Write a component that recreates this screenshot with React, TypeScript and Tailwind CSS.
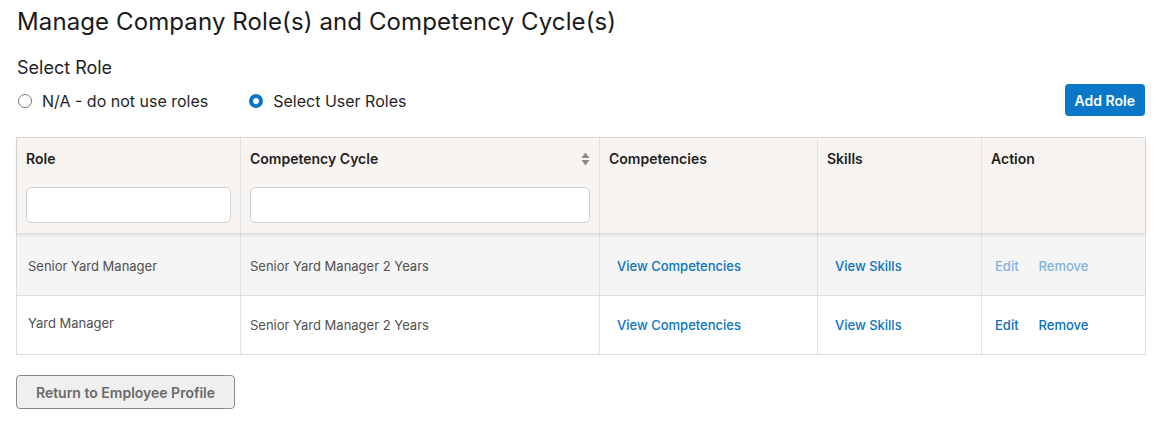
import React from "react";

const cols = "grid grid-cols-[224px_359px_218px_164px_1fr]";

function SortIcon() {
  return (
    <svg width="9" height="14" viewBox="0 0 9 14" className="text-[#8a8a8a]">
      <path d="M4.5 0.5 L8.5 6 L0.5 6 Z" fill="currentColor" />
      <path d="M4.5 13.5 L8.5 8 L0.5 8 Z" fill="currentColor" />
    </svg>
  );
}

export default function App() {
  const rows = [
    { role: "Senior Yard Manager", cycle: "Senior Yard Manager 2 Years", bg: "bg-[#f5f5f5]", h: "h-[62px]", pad: "pt-[6px]", rolePad: "pt-[6px]", disabled: true },
    { role: "Yard Manager", cycle: "Senior Yard Manager 2 Years", bg: "bg-white", h: "h-[59px]", pad: "pt-[1px]", rolePad: "pb-[3px]", disabled: false },
  ];
  return (
    <div className="px-4 pt-[6px] text-[#1f1f1f]" style={{ fontFamily: "Inter, 'Noto Sans', sans-serif" }}>
      <h1 className="text-[24px] leading-[32px] font-normal text-[#1a1a1a] pl-[1px] tracking-[0.11px]">
        Manage Company Role(s) and Competency Cycle(s)
      </h1>
      <div className="mt-[18px] text-[18px] leading-[24px] pl-[1px]">Select Role</div>
      <div className="mt-[4px] flex items-center justify-between h-[32px]">
        <div className="flex items-center text-[16px] pt-[2px]">
          <label className="flex items-center gap-[10px] ml-[2px]">
            <span className="w-[14px] h-[14px] rounded-full border border-[#767676] bg-white" />
            <span>N/A - do not use roles</span>
          </label>
          <label className="flex items-center gap-[10px] ml-[41px]">
            <span className="w-[14px] h-[14px] rounded-full bg-[#0a74c4] flex items-center justify-center">
              <span className="w-[6px] h-[6px] rounded-full bg-white" />
            </span>
            <span>Select User Roles</span>
          </label>
        </div>
        <button className="h-[32px] px-[10px] rounded-[4px] bg-[#0a77c8] text-white text-[14px] font-semibold mr-[1px]">
          Add Role
        </button>
      </div>

      <div className="mt-[21px] border border-[#dcdcdc]">
        <div className={`${cols} bg-[#f8f4f2] h-[95px] shadow-[0_2px_4px_rgba(0,0,0,0.12)] relative z-10`}>
          <div className="border-r border-[#e2e2e2] px-[9px] pt-[11px]">
            <div className="text-[14px] leading-[20px] font-semibold">Role</div>
            <div className="mt-[18px] h-[36px] bg-white border border-[#d0d0d0] rounded-[5px]" />
          </div>
          <div className="border-r border-[#e2e2e2] px-[9px] pt-[11px]">
            <div className="flex items-center justify-between text-[14px] leading-[20px] font-semibold">
              <span>Competency Cycle</span>
              <SortIcon />
            </div>
            <div className="mt-[18px] h-[36px] bg-white border border-[#d0d0d0] rounded-[5px]" />
          </div>
          <div className="border-r border-[#e2e2e2] px-[9px] pt-[11px] text-[14px] leading-[20px] font-semibold">Competencies</div>
          <div className="border-r border-[#e2e2e2] px-[9px] pt-[11px] text-[14px] leading-[20px] font-semibold">Skills</div>
          <div className="px-[9px] pt-[11px] text-[14px] leading-[20px] font-semibold">Action</div>
        </div>
        {rows.map((r, i) => (
          <div key={i} className={`${cols} ${r.bg} ${r.h} ${i > 0 ? "border-t border-[#e0e0e0]" : ""} text-[13px]`}>
            <div className={`border-r border-[#e2e2e2] pl-[11px] flex items-center text-[#505050] ${r.rolePad}`}>{r.role}</div>
            <div className={`border-r border-[#e2e2e2] pl-[9px] flex items-center text-[#505050] ${r.pad}`}>{r.cycle}</div>
            <div className={`border-r border-[#e2e2e2] pl-[17px] flex items-center text-[#0a74c4] font-medium ${r.pad}`}>View Competencies</div>
            <div className={`border-r border-[#e2e2e2] pl-[17px] flex items-center text-[#0a74c4] font-medium ${r.pad}`}>View Skills</div>
            <div className={`pl-[13px] flex items-center gap-[20px] font-medium ${r.pad} ${r.disabled ? "text-[#7fb3df]" : "text-[#0a6fbd]"}`}>
              <span>Edit</span>
              <span>Remove</span>
            </div>
          </div>
        ))}
      </div>

      <button className="mt-[20px] h-[34px] w-[219px] rounded-[4px] border border-[#8a8a8a] bg-[#efefef] text-[14px] font-semibold text-[#6a6a6a]">
        Return to Employee Profile
      </button>
    </div>
  );
}
